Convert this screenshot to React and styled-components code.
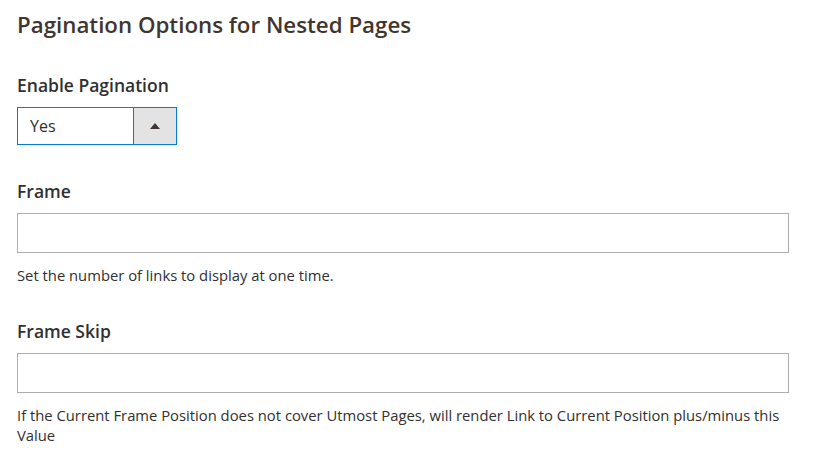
import React from 'react';
import styled, { createGlobalStyle } from 'styled-components';

const GlobalStyle = createGlobalStyle`
  html, body {
    margin: 0;
    padding: 0;
    background: #ffffff;
  }
  body {
    font-family: "Open Sans", "Liberation Sans", sans-serif;
    color: #303030;
  }
`;

const Page = styled.div`
  padding: 9px 34px 0 17px;
`;

const Title = styled.h2`
  margin: 0 0 32px;
  font-size: 22.3px;
  font-weight: 600;
  line-height: 32px;
  color: #41362f;
`;

const Field = styled.div`
  margin-bottom: 34px;
`;

const Label = styled.label`
  display: block;
  margin-bottom: 10px;
  font-size: 17.5px;
  font-weight: 600;
  line-height: 24px;
  color: #303030;
`;

const SelectBox = styled.div`
  display: flex;
  width: 160px;
  height: 38px;
  box-sizing: border-box;
  border: 1px solid #007bdb;
  background: #fff;
`;

const SelectValue = styled.div`
  flex: 1;
  display: flex;
  align-items: center;
  padding-left: 12px;
  font-size: 16px;
  color: #303030;
`;

const SelectButton = styled.div`
  width: 42px;
  display: flex;
  align-items: center;
  justify-content: center;
  background: #e3e3e3;
  border-left: 1px solid #007bdb;
`;

const Arrow = styled.span`
  width: 0;
  height: 0;
  border-left: 5px solid transparent;
  border-right: 5px solid transparent;
  border-bottom: 6px solid #41362f;
`;

const TextInput = styled.input`
  display: block;
  width: 100%;
  height: 40px;
  box-sizing: border-box;
  border: 1px solid #adadad;
  padding: 0 12px;
  font-family: inherit;
  font-size: 16px;
  outline: none;
`;

const Note = styled.div`
  margin-top: 12px;
  font-size: 14.8px;
  line-height: 20px;
  color: #303030;
`;

export default function App() {
  return (
    <>
      <GlobalStyle />
      <Page>
        <Title>Pagination Options for Nested Pages</Title>

        <Field>
          <Label>Enable Pagination</Label>
          <SelectBox>
            <SelectValue>Yes</SelectValue>
            <SelectButton>
              <Arrow />
            </SelectButton>
          </SelectBox>
        </Field>

        <Field>
          <Label>Frame</Label>
          <TextInput type="text" />
          <Note>Set the number of links to display at one time.</Note>
        </Field>

        <Field>
          <Label>Frame Skip</Label>
          <TextInput type="text" />
          <Note>
            If the Current Frame Position does not cover Utmost Pages, will render Link to Current
            Position plus/minus this Value
          </Note>
        </Field>
      </Page>
    </>
  );
}
